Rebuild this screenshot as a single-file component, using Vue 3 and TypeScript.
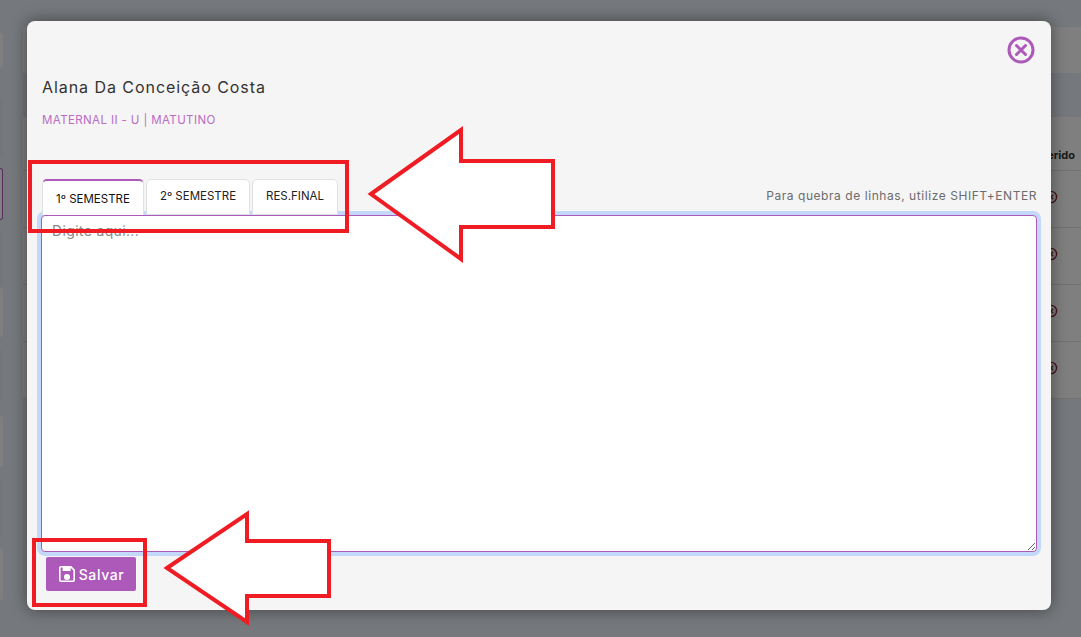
<script setup lang="ts">
interface SideCard { height: number; gap: number; tone: string }
const sideCards: SideCard[] = [
  { height: 35, gap: 33, tone: 'light' },
  { height: 55, gap: 32, tone: 'dark' },
  { height: 52, gap: 13, tone: 'active' },
  { height: 53, gap: 12, tone: 'dark' },
  { height: 49, gap: 3, tone: 'light' },
  { height: 50, gap: 13, tone: 'dark' },
  { height: 51, gap: 16, tone: 'light' },
  { height: 55, gap: 13, tone: 'dark' },
  { height: 52, gap: 13, tone: 'light' },
]
const rows = [1, 2, 3, 4]
const tabs = ['1º SEMESTRE', '2º SEMESTRE', 'RES.FINAL']
</script>

<template>
  <div class="page">
    <aside class="side">
      <div
        v-for="(c, i) in sideCards"
        :key="i"
        class="side-card"
        :class="c.tone"
        :style="{ height: c.height + 'px', marginTop: c.gap + 'px' }"
      ></div>
    </aside>
    <main class="content">
      <div class="top-card"></div>
      <section class="table">
        <div class="thead"><span>Inserido</span></div>
        <div v-for="r in rows" :key="r" class="trow">
          <svg class="row-icon" viewBox="0 0 14 14" width="14" height="14">
            <circle cx="7" cy="7" r="5.6" fill="none" stroke="#8e2a33" stroke-width="1.4" />
            <path d="M4.8 4.8l4.4 4.4M9.2 4.8l-4.4 4.4" stroke="#8e2a33" stroke-width="1.4" />
          </svg>
        </div>
      </section>
    </main>

    <div class="backdrop"></div>

    <div class="modal">
      <div class="close-row">
        <svg class="close" viewBox="0 0 28 28" width="28" height="28">
          <circle cx="14" cy="14" r="12" fill="none" stroke="#ad59ba" stroke-width="3" />
          <path d="M9.5 9.5l9 9M18.5 9.5l-9 9" stroke="#ad59ba" stroke-width="3" stroke-linecap="round" />
        </svg>
      </div>
      <h2 class="name">Alana Da Conceição Costa</h2>
      <p class="klass">MATERNAL II - U | MATUTINO</p>
      <div class="tabbar">
        <div class="tabs">
          <button
            v-for="(t, i) in tabs"
            :key="t"
            class="tab"
            :class="{ active: i === 0 }"
          >{{ t }}</button>
        </div>
        <span class="hint">Para quebra de linhas, utilize SHIFT+ENTER</span>
      </div>
      <textarea class="editor" placeholder="Digite aqui..."></textarea>
      <button class="save">
        <svg viewBox="0 0 18 18" width="18" height="18">
          <path
            fill-rule="evenodd"
            fill="#fff"
            d="M3 1h10.2L17 4.8V15a2 2 0 0 1-2 2H3a2 2 0 0 1-2-2V3a2 2 0 0 1 2-2zM3 2.6a.4.4 0 0 0-.4.4v12c0 .2.2.4.4.4h12c.2 0 .4-.2.4-.4V5.5L12.6 2.7V6H4.6V2.6zM9 9a3 3 0 1 1 0 6 3 3 0 0 1 0-6z"
          />
        </svg>
        <span>Salvar</span>
      </button>
    </div>

    <svg class="marks" viewBox="0 0 1081 637" width="1081" height="637">
      <g fill="none" stroke="#f01c24" stroke-width="4">
        <rect x="30" y="162" width="317" height="69" />
        <rect x="34" y="540" width="111" height="65" />
      </g>
      <g fill="#fff" stroke="#f01c24" stroke-width="4" stroke-linejoin="miter">
        <path d="M371 194L461 130V161H553V227H461V259Z" />
        <path d="M167 568L247 514V541H329V596H247V622Z" />
      </g>
    </svg>
  </div>
</template>

<style>
html, body { margin: 0; padding: 0; }
</style>

<style scoped>
.page {
  position: relative;
  width: 1081px;
  height: 637px;
  overflow: hidden;
  display: flex;
  background: #ebf1f8;
  font-family: Inter, "Noto Sans", sans-serif;
}
.side { width: 3px; flex: none; }
.side-card { border-radius: 0 6px 6px 0; background: #fff; }
.side-card.dark { background: #e6ecf3; }
.side-card.active { background: #fff; border: 1px solid #b05ebc; border-left: 0; box-sizing: border-box; }
.content { flex: 1; padding: 27px 0 0 20px; min-width: 0; }
.top-card { height: 46px; background: #fff; }
.table { margin-top: 44px; background: #fff; }
.thead {
  height: 54px;
  box-sizing: border-box;
  padding: 31px 6px 0 0;
  border-bottom: 1px solid #e4e4e4;
  text-align: right;
  font-size: 11px;
  font-weight: 700;
  color: #333;
}
.trow {
  height: 57px;
  box-sizing: border-box;
  border-bottom: 1px solid #e4e4e4;
  display: flex;
  align-items: center;
  justify-content: flex-end;
  padding: 0 23px 5px 0;
}
.backdrop { position: absolute; inset: 0; background: rgba(0, 0, 0, 0.5); }
.modal {
  position: absolute;
  left: 27px;
  top: 21px;
  width: 1024px;
  height: 589px;
  box-sizing: border-box;
  padding: 15px 14px 0 14px;
  background: #f5f5f5;
  border-radius: 8px;
  box-shadow: 0 0 16px rgba(0, 0, 0, 0.45);
  display: flex;
  flex-direction: column;
}
.close-row { display: flex; justify-content: flex-end; height: 28px; margin-right: 2px; }
.name {
  margin: 10px 0 0 1px;
  font-size: 16px;
  line-height: 26px;
  font-weight: 400;
  color: #333;
  letter-spacing: 0.94px;
}
.klass {
  margin: 12px 0 0 1px;
  font-size: 11.5px;
  line-height: 16px;
  color: #b86cc4;
  letter-spacing: 0.39px;
}
.tabbar {
  margin-top: 51px;
  margin-left: 1px;
  display: flex;
  justify-content: space-between;
  align-items: flex-end;
  height: 36px;
}
.tabs { display: flex; gap: 2px; position: relative; z-index: 1; }
.tab {
  height: 36px;
  box-sizing: border-box;
  padding: 0 0 2px;
  border: 1px solid #dee2e6;
  border-radius: 5px 5px 0 0;
  background: #fff;
  font-family: inherit;
  font-size: 11.5px;
  color: #222;
  width: 104px;
}
.tab:nth-child(3) { width: 86px; }
.tab.active { width: 102px; border-top: 2px solid #ad59ba; border-bottom: 0; padding: 1px 0 0; color: #111; }
.hint {
  font-size: 12px;
  line-height: 16px;
  color: #6c6c6c;
  padding-bottom: 11px;
  letter-spacing: 0.56px;
}
.editor {
  display: block;
  margin: 0;
  width: 996px;
  height: 337px;
  box-sizing: border-box;
  padding: 6px 10px;
  border: 1px solid #ad59ba;
  border-radius: 4px;
  outline: none;
  box-shadow: 0 0 0 4px #c3d8fb;
  background: #fff;
  font-family: inherit;
  font-size: 14px;
  letter-spacing: 0.35px;
  flex: none;
}
.editor::placeholder { color: #8a8a8a; opacity: 1; }
.save {
  margin: 5px 0 0 5px;
  width: 90px;
  height: 34px;
  flex: none;
  display: flex;
  align-items: center;
  justify-content: center;
  gap: 3px;
  border: 0;
  border-radius: 2px;
  background: #ad59ba;
  color: #fff;
  font-family: inherit;
  font-size: 14px;
  font-weight: 500;
  letter-spacing: 0.6px;
  padding: 0;
}
.marks { position: absolute; left: 0; top: 0; pointer-events: none; }
</style>
